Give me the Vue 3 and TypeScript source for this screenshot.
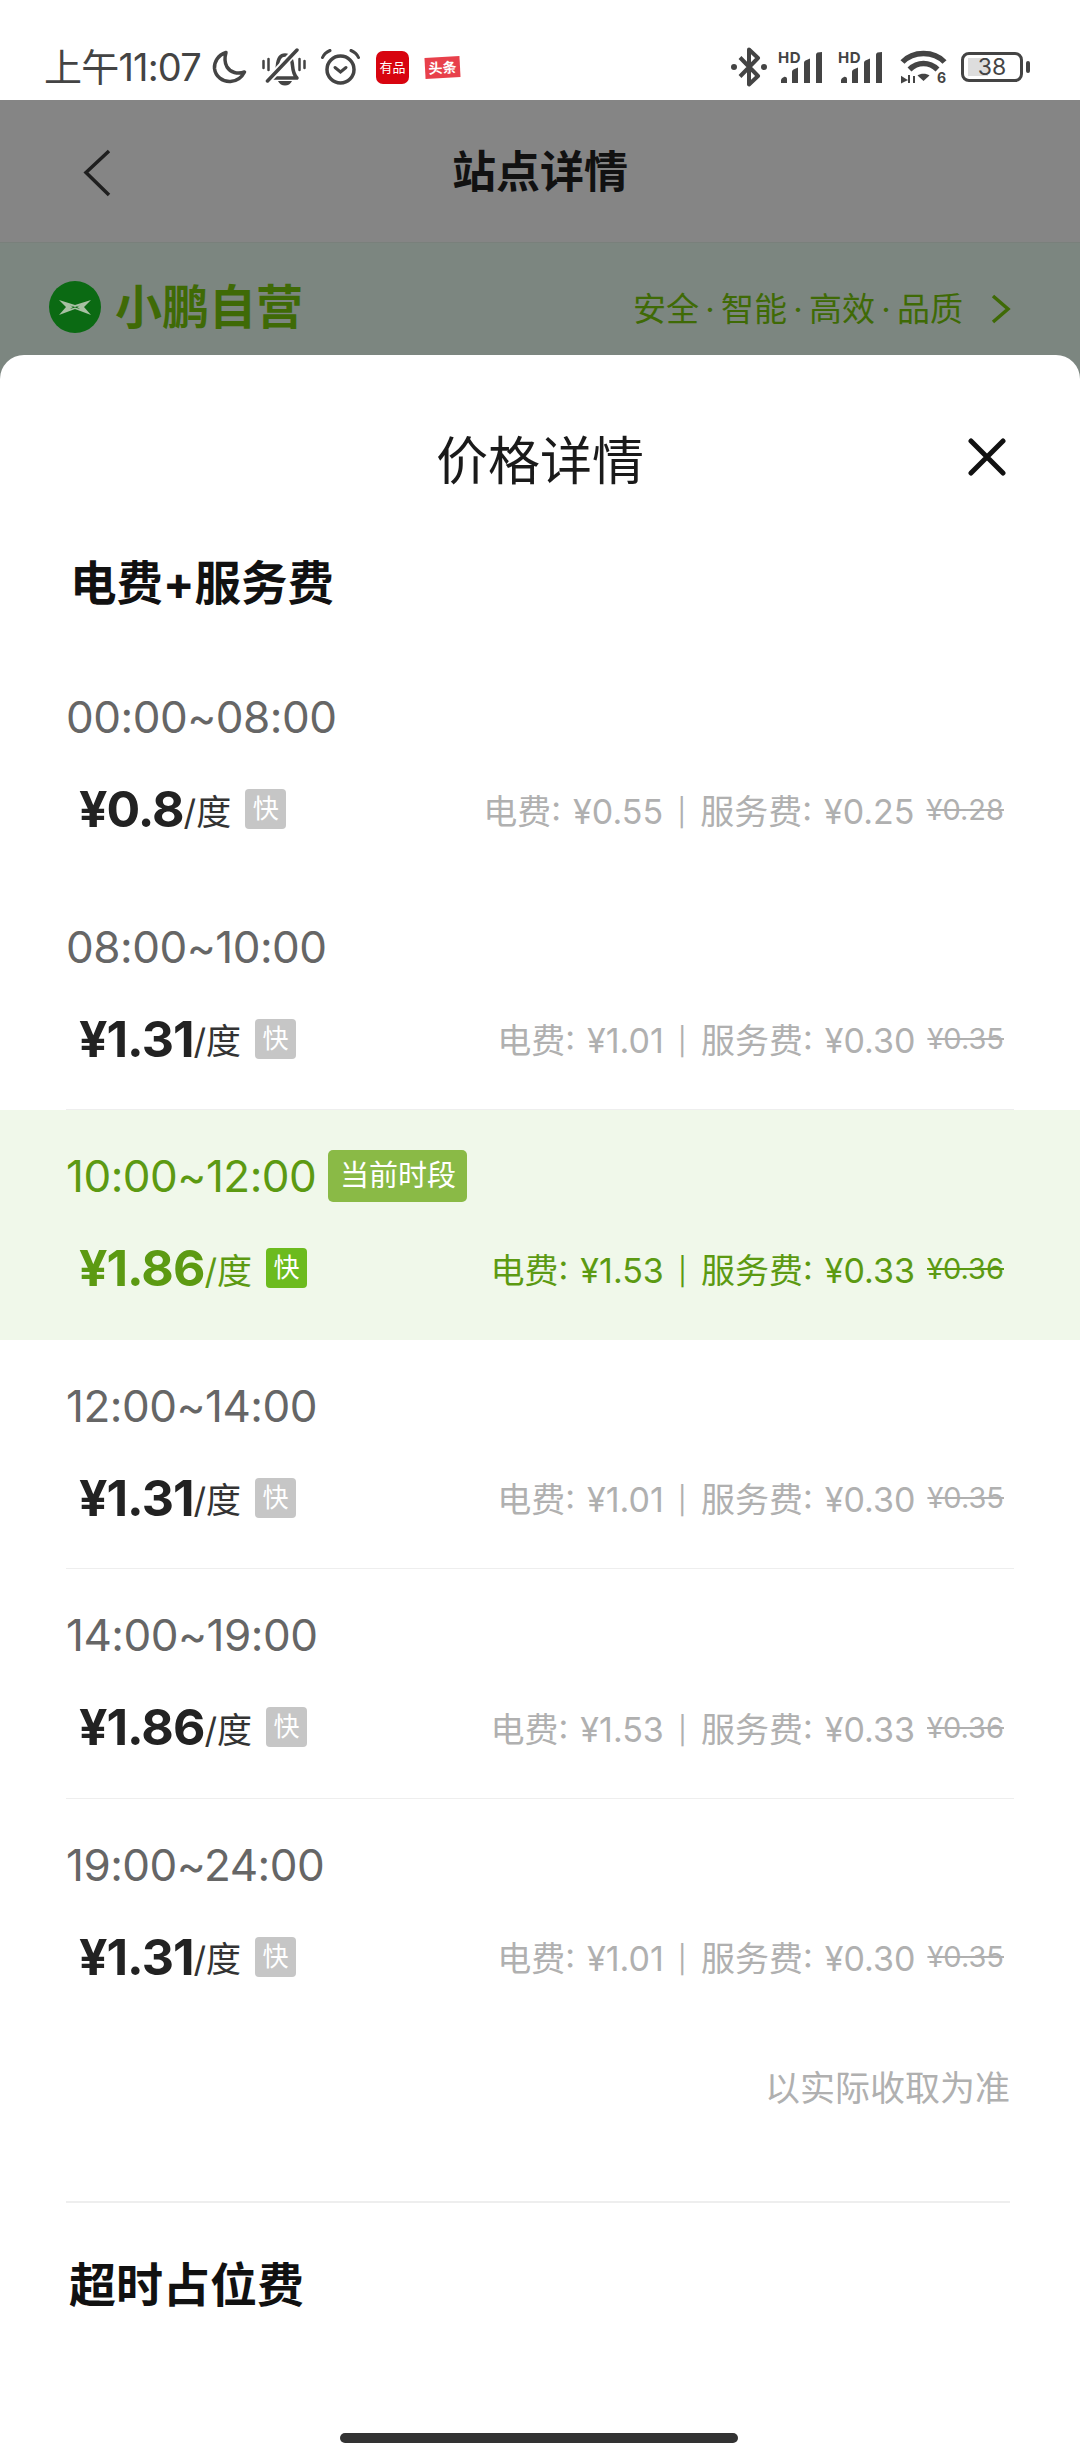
<script setup lang="ts">
interface PriceRow {
  time: string
  price: string
  elec: string
  service: string
  origin: string
  current?: boolean
}

const rows: PriceRow[] = [
  { time: '00:00~08:00', price: '¥0.8', elec: '¥0.55', service: '¥0.25', origin: '¥0.28' },
  { time: '08:00~10:00', price: '¥1.31', elec: '¥1.01', service: '¥0.30', origin: '¥0.35' },
  { time: '10:00~12:00', price: '¥1.86', elec: '¥1.53', service: '¥0.33', origin: '¥0.36', current: true },
  { time: '12:00~14:00', price: '¥1.31', elec: '¥1.01', service: '¥0.30', origin: '¥0.35' },
  { time: '14:00~19:00', price: '¥1.86', elec: '¥1.53', service: '¥0.33', origin: '¥0.36' },
  { time: '19:00~24:00', price: '¥1.31', elec: '¥1.01', service: '¥0.30', origin: '¥0.35' }
]
const slogans = ['安全', '智能', '高效', '品质']
</script>

<template>
  <div class="page">
    <div class="status-bar">
      <div class="status-left">
        <span class="clock">上午11:07</span>
        <svg class="moon" viewBox="0 0 35 34"><path d="M14 2.500C6 5 2 12 2.500 18.500 3.500 26.500 10.500 32 18.500 31.500c6-.4 11-3.500 14-9.500-7 2.500-14 .5-17.500-5C12.500 12.500 12.500 7.500 14 2.500z" fill="none" stroke="#444" stroke-width="3.500" stroke-linejoin="round" /></svg>
        <svg class="bell" viewBox="0 0 44 38">
          <path d="M11 30c3-3 4-7 4.500-12.500C16 11 18.500 7 23 7s7 4 7.500 10.500c.4 5 1.500 9.500 4.500 12.500z" fill="none" stroke="#444" stroke-width="3.500" stroke-linejoin="round" />
          <path d="M16 33h14c-1.500 3-4 4.500-7 4.500s-5.500-1.500-7-4.500z" fill="#444" />
          <path d="M1.500 13v7M6.500 11v11M37.500 11v11M42.500 13v7" stroke="#444" stroke-width="2.500" stroke-linecap="round" />
          <path d="M5 33.500L35 1.500" stroke="#fff" stroke-width="7" />
          <path d="M5.500 33L35 2" stroke="#444" stroke-width="3.500" stroke-linecap="round" />
        </svg>
        <svg class="alarm" viewBox="0 0 39 36">
          <circle cx="19.500" cy="20.500" r="13.500" fill="none" stroke="#444" stroke-width="3.500" />
          <path d="M14 18.500l5.500 4.500 5.500-4.500" fill="none" stroke="#444" stroke-width="3" stroke-linecap="round" />
          <path d="M1.500 8.500C3 5 5.500 3 9 1.500M37.500 8.500C36 5 33.500 3 30 1.500" fill="none" stroke="#444" stroke-width="3" stroke-linecap="round" />
        </svg>
        <span class="app-youpin">有品</span>
        <span class="app-toutiao">头条</span>
      </div>
      <div class="status-right">
        <svg class="bt" viewBox="0 0 36 40">
          <path d="M9 10.500l18 18.500-9 8.500V2.500l9 8.500L9 29.500" fill="none" stroke="#444" stroke-width="4" stroke-linejoin="round" />
          <circle cx="3" cy="20" r="3" fill="#444" />
          <circle cx="33" cy="20" r="3" fill="#444" />
        </svg>
        <div class="signal">
          <span class="hd">HD</span>
          <svg viewBox="0 0 49 31"><path d="M3 31v-2.500c0-1.500 1-2.800 3-3.500 1.500-.5 3 .5 3 2v4zM14 31V20c0-1 .6-2 1.500-2.500l4.500-2V31zM26 31V11c0-1 .6-2 1.500-2.500l4.500-2V31zM38 31V3c0-1 .6-2 1.500-2.500L44 0v31z" fill="#444" /></svg>
        </div>
        <div class="signal">
          <span class="hd">HD</span>
          <svg viewBox="0 0 49 31"><path d="M3 31v-2.500c0-1.500 1-2.800 3-3.500 1.500-.5 3 .5 3 2v4zM14 31V20c0-1 .6-2 1.500-2.500l4.500-2V31zM26 31V11c0-1 .6-2 1.500-2.500l4.500-2V31zM38 31V3c0-1 .6-2 1.500-2.500L44 0v31z" fill="#444" /></svg>
        </div>
        <svg class="wifi" viewBox="0 -2 50 40">
          <path d="M2.500 13C13 1.500 34 1.500 44.500 13M9.500 20.500c8-8 20-8 28 0" fill="none" stroke="#444" stroke-width="5.500" />
          <path d="M17.500 26.500c3-2.500 9-2.500 12 0l-6 5.500z" fill="#444" />
          <path d="M6 31l-4-2.500V33zM9 26v8M14 27v7" fill="#444" stroke="#444" stroke-width="2" />
          <text x="37" y="33.500" class="wifi-six">6</text>
        </svg>
        <div class="battery">
          <div class="battery-body">
            <span class="battery-fill"></span>
            <span class="battery-num">38</span>
          </div>
          <span class="battery-tip"></span>
        </div>
      </div>
    </div>

    <div class="nav">
      <svg class="back" viewBox="0 0 30 48"><path d="M27 2L4 23.500 27 46" fill="none" stroke="#1f1f1f" stroke-width="3.500" /></svg>
      <span class="nav-title">站点详情</span>
    </div>

    <div class="band">
      <div class="brand">
        <svg class="brand-logo" viewBox="0 0 52 52">
          <circle cx="26" cy="26" r="26" fill="#0b6a13" />
          <path d="M10 19l16 5 16-5-7 7 7 8-16-6-16 6 7-8z" fill="#a9c0a4" />
          <path d="M21 24.500l5 1.500 5-1.500-3 1.500 3 2-5-1.500-5 1.500 3-2z" fill="#0b6a13" />
        </svg>
        <span class="brand-name">小鹏自营</span>
      </div>
      <div class="slogan">
        <template v-for="(word, i) in slogans" :key="word">
          <span v-if="i > 0" class="slogan-dot">·</span>
          <span>{{ word }}</span>
        </template>
        <svg class="slogan-arrow" viewBox="0 0 20 30"><path d="M2 2l15 13L2 28" fill="none" stroke="#3f6a06" stroke-width="3.500" /></svg>
      </div>
    </div>

    <div class="sheet">
      <div class="sheet-head">
        <span class="sheet-title">价格详情</span>
        <svg class="close" viewBox="0 0 38 38"><path d="M3 3l32 32M35 3L3 35" stroke="#111" stroke-width="5" stroke-linecap="round" /></svg>
      </div>

      <div class="section-title first">电费+服务费</div>

      <div class="rows">
        <div v-for="row in rows" :key="row.time" class="row" :class="{ current: row.current }">
          <div class="row-inner">
            <div class="time-line">
              <span class="time">{{ row.time }}</span>
              <span v-if="row.current" class="now-tag">当前时段</span>
            </div>
            <div class="price-line">
              <span class="price">{{ row.price }}</span>
              <span class="unit">/度</span>
              <span class="fast">快</span>
              <span class="detail">电费: {{ row.elec }} <span class="bar">|</span> 服务费: {{ row.service }}</span>
              <s class="origin">{{ row.origin }}</s>
            </div>
          </div>
        </div>
      </div>

      <div class="note">以实际收取为准</div>
      <div class="split"></div>
      <div class="section-title">超时占位费</div>
    </div>

    <div class="home-bar"></div>
  </div>
</template>

<style scoped>
.page {
  position: relative;
  width: 1080px;
  height: 2460px;
  overflow: hidden;
  display: flex;
  flex-direction: column;
  background: #7c8680;
  font-family: Inter, "Noto Sans CJK SC", sans-serif;
}

.status-bar {
  height: 100px;
  padding: 46px 50px 0 44px;
  box-sizing: border-box;
  display: flex;
  justify-content: space-between;
  align-items: flex-start;
  flex-shrink: 0;
  background: #ffffff;
}

.status-left,
.status-right {
  display: flex;
  align-items: center;
  height: 42px;
}

.clock {
  width: 158px;
  font-size: 38px;
  line-height: 42px;
  color: #444444;
  letter-spacing: -0.8px;
  white-space: nowrap;
}

.moon {
  width: 35px;
  height: 34px;
  margin-left: 10px;
}

.bell {
  width: 44px;
  height: 38px;
  margin-left: 15px;
}

.alarm {
  width: 39px;
  height: 36px;
  margin-left: 15px;
}

.app-youpin {
  width: 33px;
  height: 33px;
  margin-left: 16px;
  border-radius: 7px;
  background: #d8040f;
  color: #ffffff;
  font-size: 13px;
  line-height: 33px;
  text-align: center;
}

.app-toutiao {
  width: 35px;
  height: 21px;
  margin-left: 16px;
  background: #e8404b;
  color: #ffffff;
  font-size: 14px;
  font-weight: 700;
  line-height: 21px;
  text-align: center;
  transform: rotate(-3deg);
}

.bt {
  width: 36px;
  height: 40px;
}

.signal {
  position: relative;
  width: 49px;
  height: 31px;
  margin-left: 11px;
}

.signal svg {
  position: absolute;
  left: 0;
  top: 0;
  width: 49px;
  height: 31px;
}

.hd {
  position: absolute;
  left: 0;
  top: -1px;
  font-size: 15px;
  line-height: 13px;
  font-weight: 700;
  letter-spacing: 0.5px;
  color: #444444;
}

.wifi {
  width: 50px;
  height: 40px;
  margin-left: 13px;
  margin-right: -3px;
}

.wifi-six {
  font-size: 14px;
  font-weight: 700;
  fill: #444444;
}

.battery {
  display: flex;
  align-items: center;
  margin-left: 14px;
}

.battery-body {
  position: relative;
  width: 62px;
  height: 30px;
  box-sizing: border-box;
  border: 3px solid #444444;
  border-radius: 8px;
  display: flex;
  align-items: center;
  justify-content: center;
}

.battery-fill {
  position: absolute;
  left: 4px;
  top: 3px;
  bottom: 3px;
  width: 20px;
  background: #dddddd;
}

.battery-num {
  position: relative;
  font-size: 23px;
  color: #444444;
}

.battery-tip {
  width: 4px;
  height: 12px;
  margin-left: 3px;
  background: #444444;
  border-radius: 2px;
}

.nav {
  position: relative;
  height: 143px;
  box-sizing: border-box;
  padding-bottom: 4px;
  background: #858585;
  border-bottom: 1px solid #79807b;
  display: flex;
  align-items: center;
  justify-content: center;
  flex-shrink: 0;
}

.back {
  position: absolute;
  left: 82px;
  top: 49px;
  width: 30px;
  height: 48px;
}

.nav-title {
  font-size: 44px;
  font-weight: 700;
  color: #111111;
}

.band {
  height: 112px;
  padding: 0 69px 0 49px;
  display: flex;
  justify-content: space-between;
  align-items: flex-start;
  flex-shrink: 0;
}

.brand {
  display: flex;
  align-items: center;
  gap: 14px;
  margin-top: 38px;
}

.brand-logo {
  width: 52px;
  height: 52px;
}

.brand-name {
  font-size: 47px;
  line-height: 52px;
  font-weight: 700;
  color: #3f6a06;
}

.slogan {
  display: flex;
  align-items: center;
  margin-top: 40px;
  font-size: 33px;
  line-height: 52px;
  color: #3f6a06;
}

.slogan-dot {
  width: 22px;
  text-align: center;
}

.slogan-arrow {
  width: 20px;
  height: 30px;
  margin-left: 28px;
}

.sheet {
  flex: 1;
  background: #ffffff;
  border-radius: 24px 24px 0 0;
}

.sheet-head {
  position: relative;
  padding-top: 82px;
  height: 50px;
  text-align: center;
}

.sheet-title {
  font-size: 52px;
  line-height: 50px;
  color: #1a1a1a;
}

.close {
  position: absolute;
  right: 74px;
  top: 83px;
  width: 38px;
  height: 38px;
}

.section-title {
  padding-left: 69px;
  font-size: 47px;
  line-height: 60px;
  font-weight: 700;
  color: #111111;
}

.section-title.first {
  margin-top: 66px;
  margin-bottom: 38px;
  padding-left: 70px;
  font-size: 46.500px;
}

.row {
  height: 229.5px;
  box-sizing: border-box;
  padding: 0 66px;
}

.row.current {
  background: #f0f8ea;
}

.row-inner {
  height: 100%;
  box-sizing: border-box;
  padding-top: 36px;
  border-bottom: 1px solid #eeeeee;
}

.row:first-child .row-inner,
.row.current .row-inner,
.row:last-child .row-inner {
  border-bottom-color: transparent;
}

.time-line {
  display: flex;
  align-items: center;
  height: 60px;
}

.time {
  font-size: 44px;
  line-height: 60px;
  color: #666666;
  letter-spacing: -0.5px;
}

.now-tag {
  margin-left: 12px;
  width: 139px;
  height: 52px;
  border-radius: 5px;
  background: #8aba46;
  color: #ffffff;
  font-size: 29px;
  line-height: 52px;
  text-align: center;
}

.price-line {
  display: flex;
  align-items: center;
  height: 60px;
  margin-top: 32px;
  padding: 0 10px 0 13px;
}

.price {
  font-size: 50px;
  line-height: 60px;
  font-weight: 700;
  color: #222222;
  letter-spacing: -1px;
}

.unit {
  font-size: 35px;
  color: #333333;
}

.fast {
  width: 41px;
  height: 40px;
  margin-left: 14px;
  border-radius: 4px;
  background: #c6c6c6;
  color: #ffffff;
  font-size: 26px;
  line-height: 40px;
  text-align: center;
}

.detail {
  margin-left: auto;
  font-size: 34px;
  color: #b0b0b0;
  word-spacing: 2.5px;
}

.bar {
  font-size: 27px;
  padding: 0 2px;
  vertical-align: 2px;
}

.origin {
  margin-left: 12px;
  font-size: 29px;
  color: #b0b0b0;
}

.current .time,
.current .price,
.current .unit,
.current .detail,
.current .origin {
  color: #5c9a12;
}

.current .fast {
  background: #6cbb1e;
}

.note {
  margin-top: 38px;
  padding-right: 70px;
  font-size: 35px;
  line-height: 44px;
  text-align: right;
  color: #b0b0b0;
}

.split {
  height: 2px;
  margin: 91px 70px 52px 66px;
  background: #eeeeee;
}

.home-bar {
  position: absolute;
  left: 340px;
  bottom: 17px;
  width: 398px;
  height: 10px;
  border-radius: 5px;
  background: #333333;
}
</style>
